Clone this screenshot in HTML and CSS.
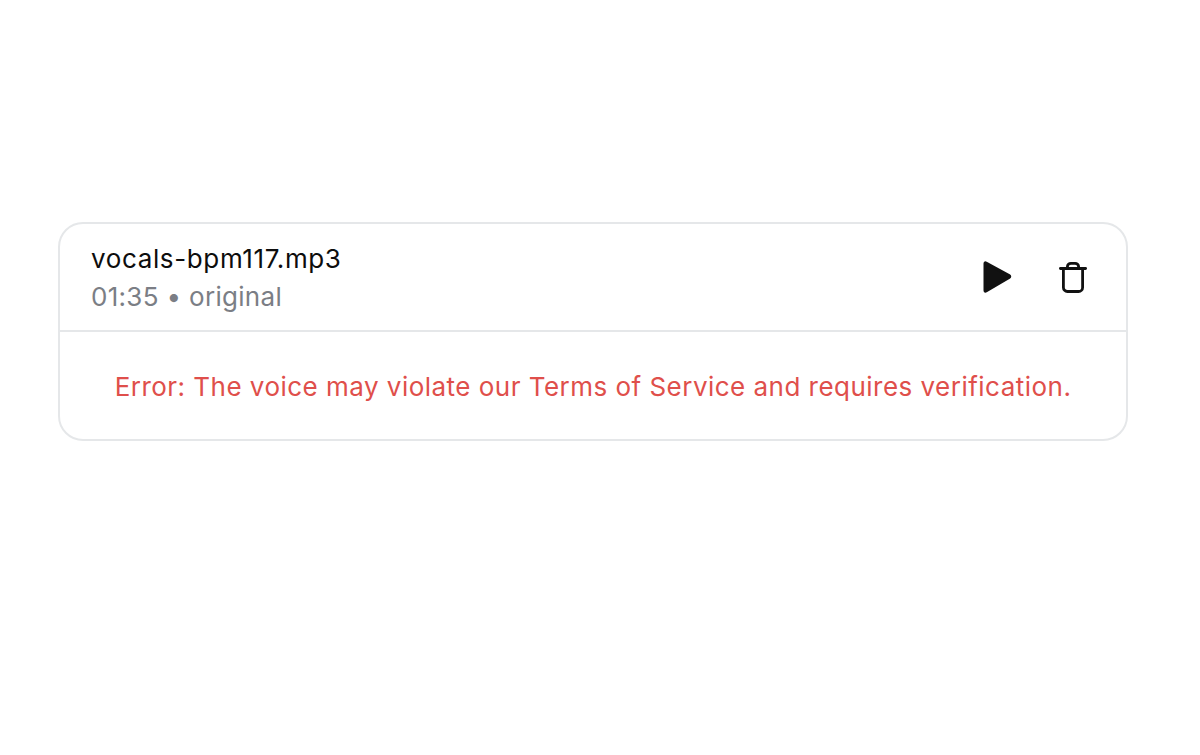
FILE: index.html
```html
<!DOCTYPE html>
<html lang="en">
<head>
<meta charset="utf-8">
<title>Track</title>
<link rel="stylesheet" href="styles.css">
</head>
<body>
<main class="page">
  <section class="card">
    <div class="head">
      <div class="info">
        <div class="name">vocals-bpm117.mp3</div>
        <div class="meta">01:35 <span class="dot">•</span> original</div>
      </div>
      <div class="actions">
        <svg class="play" width="30" height="34" viewBox="0 0 30 34"><path d="M3 3.500 Q3 2.500 4 3 L27 15.500 Q28.500 16.500 27 17.500 L4 31 Q3 31.500 3 30.500 Z" fill="#111" stroke="#111" stroke-width="3" stroke-linejoin="round"/></svg>
        <svg class="trash" width="30" height="32" viewBox="0 0 30 32" fill="none" stroke="#111" stroke-width="2.800" stroke-linecap="round" stroke-linejoin="round"><path d="M2.400 7.500h25.200"/><path d="M9.400 7.500V5.800a3.500 3.500 0 0 1 3.500-3.500h4.200a3.500 3.500 0 0 1 3.500 3.500v1.700"/><path d="M5.400 7.500V26.500a4 4 0 0 0 4 4h11.200a4 4 0 0 0 4-4V7.500"/></svg>
      </div>
    </div>
    <div class="error">Error: The voice may violate our Terms of Service and requires verification.</div>
  </section>
</main>
</body>
</html>
```
FILE: styles.css
```css
* { box-sizing: border-box; }
html, body { margin: 0; height: 100%; background: #fff; }
body { font-family: Inter, "Liberation Sans", sans-serif; }
.page { padding: 222px 72px 0 58px; }
.card { border: 2px solid #e5e7e9; border-radius: 25px; height: 219px; display: flex; flex-direction: column; }
.head { height: 108px; border-bottom: 2px solid #e5e7e9; display: flex; align-items: center; justify-content: space-between; padding: 0 38px 0 31px; }
.info { padding-top: 2px; }
.name { font-size: 26px; line-height: 38px; color: #0d0d0d; font-weight: 440; letter-spacing: .63px; }
.meta { font-size: 26px; line-height: 38px; color: #7b7e85; letter-spacing: .3px; }
.dot { font-size: 26px; }
.actions { display: flex; align-items: center; gap: 46px; }
.error { flex: 1; padding-top: 2px; display: flex; align-items: center; justify-content: center; font-size: 26px; font-weight: 440; letter-spacing: .475px; color: #df4f4b; }
```
